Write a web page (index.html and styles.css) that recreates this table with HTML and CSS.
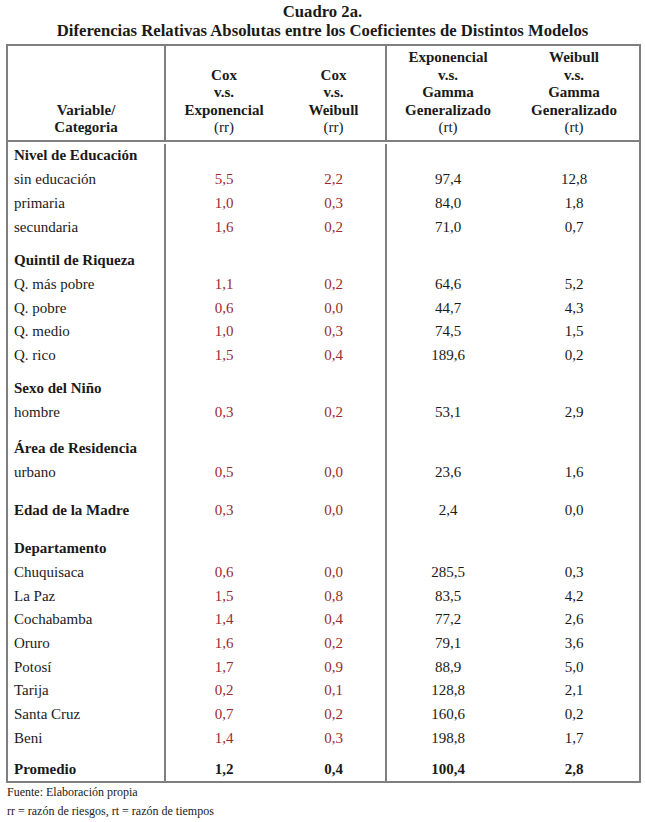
FILE: index.html
```html
<!DOCTYPE html>
<html lang="es">
<head>
<meta charset="utf-8">
<title>Cuadro 2a.</title>
<link rel="stylesheet" href="styles.css">
</head>
<body>
<div class="page">
  <h1 class="title">Cuadro 2a.<br>Diferencias Relativas Absolutas entre los Coeficientes de Distintos Modelos</h1>
  <div class="table">
    <div class="row head">
      <div class="c c1 hc"><div class="hd"><b>Variable/</b><br><b>Categoria</b></div></div>
      <div class="c hc"><div class="hd"><b>Cox</b><br><b>v.s.</b><br><b>Exponencial</b><br>(rr)</div></div>
      <div class="c c3 hc"><div class="hd"><b>Cox</b><br><b>v.s.</b><br><b>Weibull</b><br>(rr)</div></div>
      <div class="c hc"><div class="hd"><b>Exponencial</b><br><b>v.s.</b><br><b>Gamma</b><br><b>Generalizado</b><br>(rt)</div></div>
      <div class="c hc"><div class="hd"><b>Weibull</b><br><b>v.s.</b><br><b>Gamma</b><br><b>Generalizado</b><br>(rt)</div></div>
    </div>
    <div class="body">
      <div class="row grp g0"><div class="c c1 lab b">Nivel de Educación</div><div class="c"></div><div class="c c3"></div><div class="c"></div><div class="c"></div></div>
      <div class="row"><div class="c c1 lab">sin educación</div><div class="c red">5,5</div><div class="c c3 red">2,2</div><div class="c">97,4</div><div class="c">12,8</div></div>
      <div class="row"><div class="c c1 lab">primaria</div><div class="c red">1,0</div><div class="c c3 red">0,3</div><div class="c">84,0</div><div class="c">1,8</div></div>
      <div class="row"><div class="c c1 lab">secundaria</div><div class="c red">1,6</div><div class="c c3 red">0,2</div><div class="c">71,0</div><div class="c">0,7</div></div>

      <div class="row grp g1"><div class="c c1 lab b">Quintil de Riqueza</div><div class="c"></div><div class="c c3"></div><div class="c"></div><div class="c"></div></div>
      <div class="row"><div class="c c1 lab">Q. más pobre</div><div class="c red">1,1</div><div class="c c3 red">0,2</div><div class="c">64,6</div><div class="c">5,2</div></div>
      <div class="row"><div class="c c1 lab">Q. pobre</div><div class="c red">0,6</div><div class="c c3 red">0,0</div><div class="c">44,7</div><div class="c">4,3</div></div>
      <div class="row"><div class="c c1 lab">Q. medio</div><div class="c red">1,0</div><div class="c c3 red">0,3</div><div class="c">74,5</div><div class="c">1,5</div></div>
      <div class="row"><div class="c c1 lab">Q. rico</div><div class="c red">1,5</div><div class="c c3 red">0,4</div><div class="c">189,6</div><div class="c">0,2</div></div>

      <div class="row grp g2"><div class="c c1 lab b">Sexo del Niño</div><div class="c"></div><div class="c c3"></div><div class="c"></div><div class="c"></div></div>
      <div class="row"><div class="c c1 lab">hombre</div><div class="c red">0,3</div><div class="c c3 red">0,2</div><div class="c">53,1</div><div class="c">2,9</div></div>

      <div class="row grp g3"><div class="c c1 lab b">Área de Residencia</div><div class="c"></div><div class="c c3"></div><div class="c"></div><div class="c"></div></div>
      <div class="row"><div class="c c1 lab">urbano</div><div class="c red">0,5</div><div class="c c3 red">0,0</div><div class="c">23,6</div><div class="c">1,6</div></div>

      <div class="row grp g4"><div class="c c1 lab b">Edad de la Madre</div><div class="c red">0,3</div><div class="c c3 red">0,0</div><div class="c">2,4</div><div class="c">0,0</div></div>

      <div class="row grp g4"><div class="c c1 lab b">Departamento</div><div class="c"></div><div class="c c3"></div><div class="c"></div><div class="c"></div></div>
      <div class="row"><div class="c c1 lab">Chuquisaca</div><div class="c red">0,6</div><div class="c c3 red">0,0</div><div class="c">285,5</div><div class="c">0,3</div></div>
      <div class="row"><div class="c c1 lab">La Paz</div><div class="c red">1,5</div><div class="c c3 red">0,8</div><div class="c">83,5</div><div class="c">4,2</div></div>
      <div class="row"><div class="c c1 lab">Cochabamba</div><div class="c red">1,4</div><div class="c c3 red">0,4</div><div class="c">77,2</div><div class="c">2,6</div></div>
      <div class="row"><div class="c c1 lab">Oruro</div><div class="c red">1,6</div><div class="c c3 red">0,2</div><div class="c">79,1</div><div class="c">3,6</div></div>
      <div class="row"><div class="c c1 lab">Potosí</div><div class="c red">1,7</div><div class="c c3 red">0,9</div><div class="c">88,9</div><div class="c">5,0</div></div>
      <div class="row"><div class="c c1 lab">Tarija</div><div class="c red">0,2</div><div class="c c3 red">0,1</div><div class="c">128,8</div><div class="c">2,1</div></div>
      <div class="row"><div class="c c1 lab">Santa Cruz</div><div class="c red">0,7</div><div class="c c3 red">0,2</div><div class="c">160,6</div><div class="c">0,2</div></div>
      <div class="row"><div class="c c1 lab">Beni</div><div class="c red">1,4</div><div class="c c3 red">0,3</div><div class="c">198,8</div><div class="c">1,7</div></div>

      <div class="row grp g5 total"><div class="c c1 lab b">Promedio</div><div class="c b">1,2</div><div class="c c3 b">0,4</div><div class="c b">100,4</div><div class="c b">2,8</div></div>
    </div>
  </div>
  <div class="notes">
    <p>Fuente: Elaboración propia</p>
    <p>rr = razón de riesgos, rt = razón de tiempos</p>
  </div>
</div>
</body>
</html>
```
FILE: styles.css
```css
html, body {
  margin: 0;
  padding: 0;
  background: #ffffff;
}
body {
  font-family: "Liberation Serif", "Times New Roman", serif;
  color: #1a1a1a;
}
.page {
  width: 645px;
  padding-top: 2px;
}
.title {
  margin: 0 0 4px 0;
  font-size: 16.7px;
  line-height: 19px;
  font-weight: bold;
  text-align: center;
}
.table {
  margin-left: 6px;
  width: 635px;
  box-sizing: border-box;
  border: 2px solid #7f7f7f;
}
.row {
  display: grid;
  grid-template-columns: 158px 116px 105px 122px 130px;
}
.c {
  box-sizing: border-box;
  text-align: center;
  font-size: 15px;
  line-height: 23.7px;
  white-space: nowrap;
}
.c1, .c3 {
  border-right: 2px solid #7f7f7f;
}
.head {
  border-bottom: 2px solid #7f7f7f;
}
.head .c {
  padding: 3px 0 3px 0;
  display: flex;
  flex-direction: column;
  justify-content: flex-end;
}
.hd {
  line-height: 17.6px;
}
.body {
  padding-top: 2.5px;
}
.lab {
  text-align: left;
  padding-left: 6px;
}
.b {
  font-weight: bold;
}
.red {
  color: #9c2a2e;
}
.g0 .c { padding-top: 0; }
.g1 .c { padding-top: 10px; }
.g2 .c { padding-top: 9.5px; }
.g3 .c { padding-top: 12.6px; }
.g4 .c { padding-top: 14.4px; }
.g5 .c { padding-top: 7.2px; }
.notes {
  margin-left: 7px;
  font-size: 12px;
  line-height: 19px;
}
.notes p {
  margin: 0;
}
```
